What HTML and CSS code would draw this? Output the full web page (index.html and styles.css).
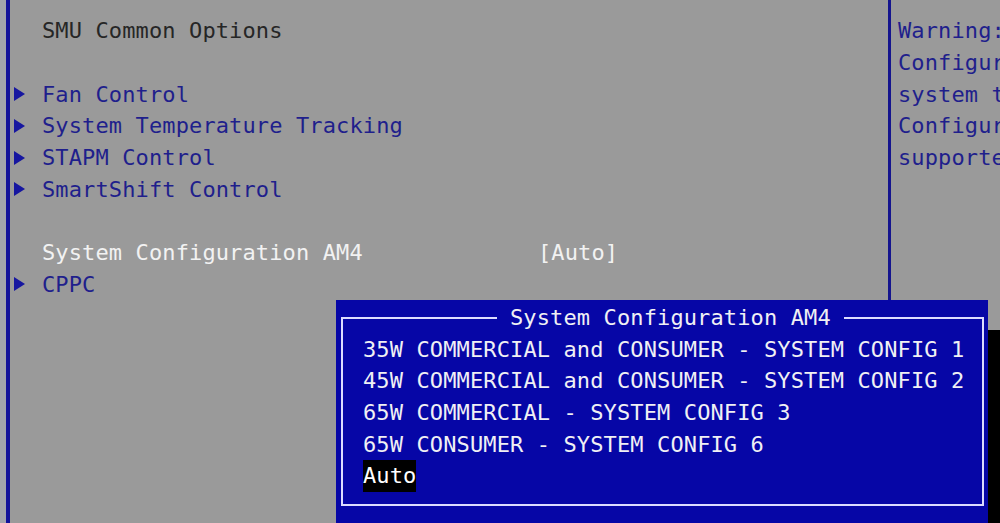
FILE: index.html
```html
<!DOCTYPE html>
<html lang="en">

<head>
    <meta charset="UTF-8">
    <meta name="viewport" content="width=device-width, initial-scale=1.0">
    <title>SMU Common Options</title>
    <link rel="stylesheet" href="styles.css">
</head>

<body>
    <div class="screen">
        <div class="edge"></div>

        <!-- main settings list -->
        <main class="panel">
            <div class="row heading">SMU Common Options</div>
            <div class="row"></div>
            <div class="row link">Fan Control</div>
            <div class="row link">System Temperature Tracking</div>
            <div class="row link">STAPM Control</div>
            <div class="row link">SmartShift Control</div>
            <div class="row"></div>
            <div class="row setting">
                <span class="label">System Configuration AM4</span>
                <span class="value">[Auto]</span>
            </div>
            <div class="row link">CPPC</div>
        </main>

        <!-- help text (cut off by the screen edge) -->
        <aside class="help">
            <div class="row">Warning: System</div>
            <div class="row">Configuration may</div>
            <div class="row">system to</div>
            <div class="row">Configuration not</div>
            <div class="row">supported by board</div>
        </aside>

        <!-- option popup -->
        <div class="popup">
            <fieldset class="popup-frame">
                <legend>System Configuration AM4</legend>
                <div class="option">35W COMMERCIAL and CONSUMER - SYSTEM CONFIG 1</div>
                <div class="option">45W COMMERCIAL and CONSUMER - SYSTEM CONFIG 2</div>
                <div class="option">65W COMMERCIAL - SYSTEM CONFIG 3</div>
                <div class="option">65W CONSUMER - SYSTEM CONFIG 6</div>
                <div class="option"><span class="selected">Auto</span></div>
            </fieldset>
        </div>
    </div>
</body>

</html>
```

FILE: styles.css
```css
/* page */
body {
    margin: 0;
    padding: 0;
    background: #9a9a9a;
    font-family: "DejaVu Sans Mono", "Liberation Mono", monospace;
    font-size: 22px;
    letter-spacing: 0.12px;
}

.screen {
    position: relative;
    display: flex;
    width: 1000px;
    height: 523px;
    overflow: hidden;
    background: #9a9a9a;
}

.edge {
    width: 6px;
    background: #a2a5ac;
}

/* left list */
.panel {
    width: 878px;
    padding-top: 15px;
    border-left: 4px solid #12129a;
    border-right: 3px solid #14148e;
}

.row {
    display: flex;
    align-items: center;
    height: 31.7px;
    padding-left: 32px;
    white-space: pre;
}

.heading {
    color: #262626;
}

.link {
    padding-left: 4px;
    color: #1f1f8c;
}

.link::before {
    content: '';
    width: 0;
    height: 0;
    border-left: 11px solid #1616a0;
    border-top: 7px solid transparent;
    border-bottom: 7px solid transparent;
    margin-right: 17px;
}

.setting {
    color: #f2f2f2;
}

.setting .label {
    width: 496px;
}

/* help column */
.help {
    flex: 1;
    padding-top: 15px;
    overflow: hidden;
    color: #1f1f8c;
}

.help .row {
    padding-left: 7px;
}

/* popup */
.popup {
    position: absolute;
    left: 336px;
    top: 300px;
    width: 652px;
    height: 240px;
    padding: 2px 4px 0 5px;
    box-sizing: border-box;
    background: #0606a6;
    color: #f0f0f4;
    box-shadow: 14px 30px 0 #000;
}

.popup-frame {
    margin: 0;
    padding: 0 0 13px 20px;
    height: 204px;
    box-sizing: border-box;
    border: 2px solid #dcdcff;
}

.popup-frame legend {
    margin-left: 134px;
    padding: 0 13px;
    height: 31.7px;
    line-height: 31.7px;
    white-space: pre;
}

.option {
    height: 31.7px;
    line-height: 31.7px;
    white-space: pre;
}

.selected {
    display: inline-block;
    background: #000;
    color: #fff;
}
```
